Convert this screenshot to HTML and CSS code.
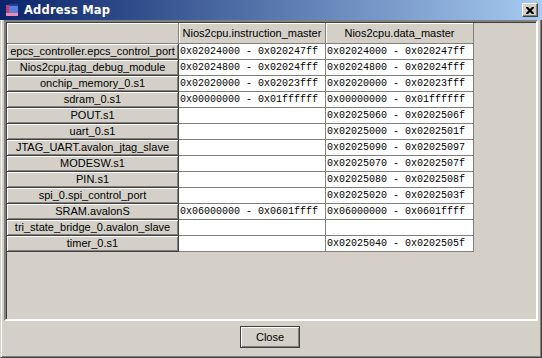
FILE: index.html
```html
<!DOCTYPE html>
<html lang="en">

<head>
    <meta charset="UTF-8">
    <meta name="viewport" content="width=device-width, initial-scale=1.0">
    <title>Address Map</title>
    <link rel="stylesheet" href="styles.css">
</head>

<body>
    <div class="window">
        <div class="titlebar">
            <svg class="app-icon" width="14" height="14" viewBox="0 0 14 14">
                <rect x="4" y="1" width="9" height="9" fill="#5a7ee0" />
                <rect x="4" y="1" width="9" height="2" fill="#2a3f9a" />
                <rect x="1" y="2" width="3" height="9" fill="#c83c6a" />
                <rect x="1" y="10" width="12" height="3" fill="#f08cb4" />
            </svg>
            <span class="title">Address Map</span>
            <div class="title-close">
                <svg width="8" height="7" viewBox="0 0 8 7">
                    <path d="M0 0h2l2 2 2-2h2v1l-2.5 2.5 2.5 2.5v1h-2l-2-2-2 2h-2v-1l2.5-2.5-2.5-2.5z" fill="#000" />
                </svg>
            </div>
        </div>

        <div class="frame">
            <div class="scroll-pane">
                <div class="map-grid">
                    <div class="corner"></div>
                    <div class="col-head">Nios2cpu.instruction_master</div>
                    <div class="col-head">Nios2cpu.data_master</div>

                    <div class="row-head">epcs_controller.epcs_control_port</div>
                    <div class="cell">0x02024000 - 0x020247ff</div>
                    <div class="cell">0x02024000 - 0x020247ff</div>

                    <div class="row-head">Nios2cpu.jtag_debug_module</div>
                    <div class="cell">0x02024800 - 0x02024fff</div>
                    <div class="cell">0x02024800 - 0x02024fff</div>

                    <div class="row-head">onchip_memory_0.s1</div>
                    <div class="cell">0x02020000 - 0x02023fff</div>
                    <div class="cell">0x02020000 - 0x02023fff</div>

                    <div class="row-head">sdram_0.s1</div>
                    <div class="cell">0x00000000 - 0x01ffffff</div>
                    <div class="cell">0x00000000 - 0x01ffffff</div>

                    <div class="row-head">POUT.s1</div>
                    <div class="cell"></div>
                    <div class="cell">0x02025060 - 0x0202506f</div>

                    <div class="row-head">uart_0.s1</div>
                    <div class="cell"></div>
                    <div class="cell">0x02025000 - 0x0202501f</div>

                    <div class="row-head">JTAG_UART.avalon_jtag_slave</div>
                    <div class="cell"></div>
                    <div class="cell">0x02025090 - 0x02025097</div>

                    <div class="row-head">MODESW.s1</div>
                    <div class="cell"></div>
                    <div class="cell">0x02025070 - 0x0202507f</div>

                    <div class="row-head">PIN.s1</div>
                    <div class="cell"></div>
                    <div class="cell">0x02025080 - 0x0202508f</div>

                    <div class="row-head">spi_0.spi_control_port</div>
                    <div class="cell"></div>
                    <div class="cell">0x02025020 - 0x0202503f</div>

                    <div class="row-head">SRAM.avalonS</div>
                    <div class="cell">0x06000000 - 0x0601ffff</div>
                    <div class="cell">0x06000000 - 0x0601ffff</div>

                    <div class="row-head">tri_state_bridge_0.avalon_slave</div>
                    <div class="cell"></div>
                    <div class="cell"></div>

                    <div class="row-head">timer_0.s1</div>
                    <div class="cell"></div>
                    <div class="cell">0x02025040 - 0x0202505f</div>
                </div>
            </div>

            <div class="button-row">
                <button class="btn">Close</button>
            </div>
        </div>
    </div>
</body>

</html>
```

FILE: styles.css
```css
body {
    margin: 0;
    background-color: #d4d0c8;
    font-family: 'Liberation Sans', Arial, sans-serif;
    font-size: 11px;
    color: #000;
}

.window {
    width: 542px;
    height: 358px;
    display: flex;
    flex-direction: column;
    background-color: #d4d0c8;
}

/* title bar */
.titlebar {
    height: 20px;
    flex-shrink: 0;
    display: flex;
    align-items: center;
    background: linear-gradient(to right, #0a246a, #a6caf0);
    padding: 0 4px 0 5px;
}

.app-icon {
    margin-right: 5px;
}

.title {
    flex: 1;
    color: #fff;
    font-family: 'DejaVu Sans', sans-serif;
    font-weight: bold;
    font-size: 11.5px;
    letter-spacing: 0.2px;
}

.title-close {
    width: 16px;
    height: 14px;
    box-sizing: border-box;
    display: flex;
    align-items: center;
    justify-content: center;
    background-color: #d4d0c8;
    border: 1px solid;
    border-color: #fff #404040 #404040 #fff;
    box-shadow: inset -1px -1px #808080;
}

/* window body */
.frame {
    flex: 1;
    display: flex;
    flex-direction: column;
    border-left: 1px solid #d4d0c8;
    border-right: 1px solid #404040;
    border-bottom: 1px solid #404040;
    box-shadow: inset 1px 0 #fff, inset -1px -1px #808080;
    padding: 0 3px 1px 3px;
}

.scroll-pane {
    height: 301px;
    box-sizing: border-box;
    border: 2px solid;
    border-color: #808080 #fff #fff #808080;
    box-shadow: inset 1px 1px #404040;
    padding: 1px 0 0 1px;
}

.map-grid {
    display: grid;
    grid-template-columns: 172px 147px 148px;
    grid-template-rows: 21px repeat(13, 16px);
}

.corner,
.col-head {
    background-color: #d4d0c8;
    border-right: 1px solid #808080;
    border-bottom: 1px solid #808080;
    box-shadow: inset 1px 1px #fff;
}

.col-head {
    text-align: center;
    line-height: 20px;
    white-space: nowrap;
}

.row-head {
    background-color: #d4d0c8;
    border-right: 1px solid #404040;
    border-bottom: 1px solid #404040;
    box-shadow: inset 1px 1px #fff, inset -1px -1px #808080;
    text-align: center;
    line-height: 15px;
    white-space: nowrap;
    overflow: hidden;
}

.cell {
    background-color: #fff;
    border-right: 1px solid #808080;
    border-bottom: 1px solid #808080;
    font-family: 'Liberation Mono', 'Courier New', monospace;
    font-size: 10px;
    line-height: 15px;
    padding-left: 1px;
    white-space: nowrap;
}

/* bottom buttons */
.button-row {
    display: flex;
    justify-content: center;
    padding-top: 5px;
    margin-left: -2px;
}

.btn {
    width: 60px;
    height: 22px;
    font-family: 'Liberation Sans', Arial, sans-serif;
    font-size: 11px;
    background-color: #d4d0c8;
    border: 1px solid #404040;
    box-shadow: inset 1px 1px #fff, inset -1px -1px #808080;
    padding: 0;
    color: #000;
}
```
